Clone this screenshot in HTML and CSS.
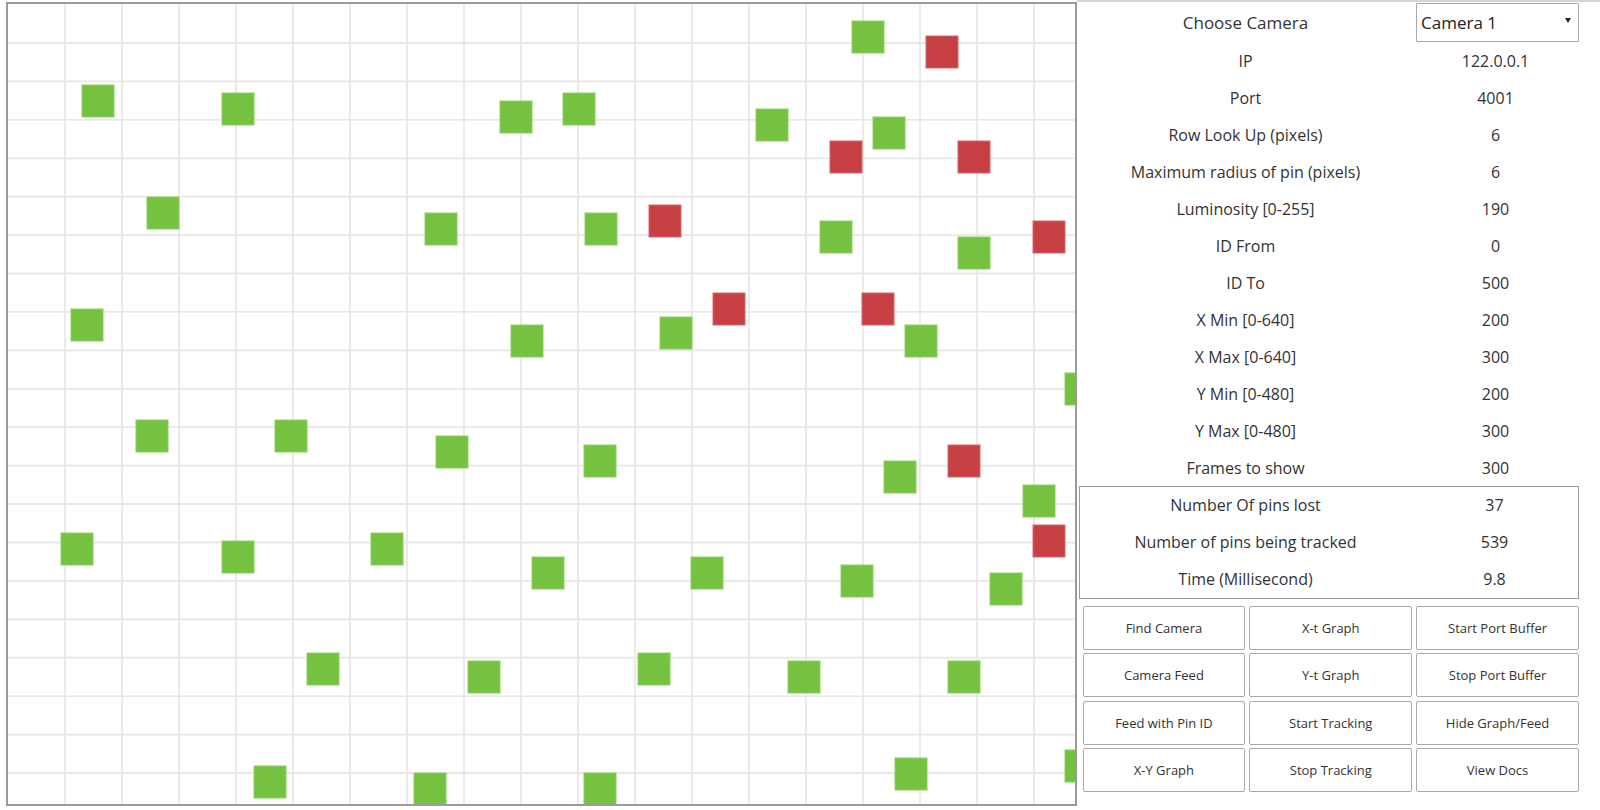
FILE: index.html
```html
<!DOCTYPE html>
<html lang="en">
<head>
<meta charset="utf-8">
<title>Pin Tracker</title>
<link rel="stylesheet" href="styles.css">
</head>
<body>
<div class="app">
  <div class="viewport">
    <svg class="feed" width="1067" height="800" viewBox="0 0 1067 800" xmlns="http://www.w3.org/2000/svg">
      <g class="grid">
        <line x1="57" y1="0" x2="57" y2="800"/>
        <line x1="114" y1="0" x2="114" y2="800"/>
        <line x1="171" y1="0" x2="171" y2="800"/>
        <line x1="228" y1="0" x2="228" y2="800"/>
        <line x1="285" y1="0" x2="285" y2="800"/>
        <line x1="342" y1="0" x2="342" y2="800"/>
        <line x1="399" y1="0" x2="399" y2="800"/>
        <line x1="456" y1="0" x2="456" y2="800"/>
        <line x1="513" y1="0" x2="513" y2="800"/>
        <line x1="570" y1="0" x2="570" y2="800"/>
        <line x1="627" y1="0" x2="627" y2="800"/>
        <line x1="684" y1="0" x2="684" y2="800"/>
        <line x1="741" y1="0" x2="741" y2="800"/>
        <line x1="798" y1="0" x2="798" y2="800"/>
        <line x1="855" y1="0" x2="855" y2="800"/>
        <line x1="912" y1="0" x2="912" y2="800"/>
        <line x1="969" y1="0" x2="969" y2="800"/>
        <line x1="1026" y1="0" x2="1026" y2="800"/>
        <line x1="0" y1="39" x2="1067" y2="39"/>
        <line x1="0" y1="77.4" x2="1067" y2="77.4"/>
        <line x1="0" y1="115.8" x2="1067" y2="115.8"/>
        <line x1="0" y1="154.3" x2="1067" y2="154.3"/>
        <line x1="0" y1="192.7" x2="1067" y2="192.7"/>
        <line x1="0" y1="231.1" x2="1067" y2="231.1"/>
        <line x1="0" y1="269.5" x2="1067" y2="269.5"/>
        <line x1="0" y1="307.9" x2="1067" y2="307.9"/>
        <line x1="0" y1="346.4" x2="1067" y2="346.4"/>
        <line x1="0" y1="384.8" x2="1067" y2="384.8"/>
        <line x1="0" y1="423.2" x2="1067" y2="423.2"/>
        <line x1="0" y1="461.6" x2="1067" y2="461.6"/>
        <line x1="0" y1="500" x2="1067" y2="500"/>
        <line x1="0" y1="538.5" x2="1067" y2="538.5"/>
        <line x1="0" y1="576.9" x2="1067" y2="576.9"/>
        <line x1="0" y1="615.3" x2="1067" y2="615.3"/>
        <line x1="0" y1="653.7" x2="1067" y2="653.7"/>
        <line x1="0" y1="692.1" x2="1067" y2="692.1"/>
        <line x1="0" y1="730.6" x2="1067" y2="730.6"/>
        <line x1="0" y1="769" x2="1067" y2="769"/>
      </g>
      <g class="pins ok">
        <rect x="844" y="17" width="32" height="32"/>
        <rect x="74" y="81" width="32" height="32"/>
        <rect x="214" y="89" width="32" height="32"/>
        <rect x="492" y="97" width="32" height="32"/>
        <rect x="555" y="89" width="32" height="32"/>
        <rect x="748" y="105" width="32" height="32"/>
        <rect x="865" y="113" width="32" height="32"/>
        <rect x="139" y="193" width="32" height="32"/>
        <rect x="417" y="209" width="32" height="32"/>
        <rect x="577" y="209" width="32" height="32"/>
        <rect x="812" y="217" width="32" height="32"/>
        <rect x="950" y="233" width="32" height="32"/>
        <rect x="63" y="305" width="32" height="32"/>
        <rect x="503" y="321" width="32" height="32"/>
        <rect x="652" y="313" width="32" height="32"/>
        <rect x="897" y="321" width="32" height="32"/>
        <rect x="1057" y="369" width="32" height="32"/>
        <rect x="128" y="416" width="32" height="32"/>
        <rect x="267" y="416" width="32" height="32"/>
        <rect x="428" y="432" width="32" height="32"/>
        <rect x="576" y="441" width="32" height="32"/>
        <rect x="876" y="457" width="32" height="32"/>
        <rect x="1015" y="481" width="32" height="32"/>
        <rect x="53" y="529" width="32" height="32"/>
        <rect x="214" y="537" width="32" height="32"/>
        <rect x="363" y="529" width="32" height="32"/>
        <rect x="524" y="553" width="32" height="32"/>
        <rect x="683" y="553" width="32" height="32"/>
        <rect x="833" y="561" width="32" height="32"/>
        <rect x="982" y="569" width="32" height="32"/>
        <rect x="299" y="649" width="32" height="32"/>
        <rect x="460" y="657" width="32" height="32"/>
        <rect x="630" y="649" width="32" height="32"/>
        <rect x="780" y="657" width="32" height="32"/>
        <rect x="940" y="657" width="32" height="32"/>
        <rect x="246" y="762" width="32" height="32"/>
        <rect x="406" y="769" width="32" height="32"/>
        <rect x="576" y="769" width="32" height="32"/>
        <rect x="887" y="754" width="32" height="32"/>
        <rect x="1057" y="746" width="32" height="32"/>
      </g>
      <g class="pins lost">
        <rect x="918" y="32" width="32" height="32"/>
        <rect x="822" y="137" width="32" height="32"/>
        <rect x="950" y="137" width="32" height="32"/>
        <rect x="641" y="201" width="32" height="32"/>
        <rect x="1025" y="217" width="32" height="32"/>
        <rect x="705" y="289" width="32" height="32"/>
        <rect x="854" y="289" width="32" height="32"/>
        <rect x="940" y="441" width="32" height="32"/>
        <rect x="1025" y="521" width="32" height="32"/>
      </g>
    </svg>
  </div>

  <div class="panel">
    <div class="row first">
      <div class="label">Choose Camera</div>
      <div class="select"><span>Camera 1</span><span class="caret"></span></div>
    </div>
    <div class="row"><div class="label">IP</div><div class="value">122.0.0.1</div></div>
    <div class="row"><div class="label">Port</div><div class="value">4001</div></div>
    <div class="row"><div class="label">Row Look Up (pixels)</div><div class="value">6</div></div>
    <div class="row"><div class="label">Maximum radius of pin (pixels)</div><div class="value">6</div></div>
    <div class="row"><div class="label">Luminosity [0-255]</div><div class="value">190</div></div>
    <div class="row"><div class="label">ID From</div><div class="value">0</div></div>
    <div class="row"><div class="label">ID To</div><div class="value">500</div></div>
    <div class="row"><div class="label">X Min [0-640]</div><div class="value">200</div></div>
    <div class="row"><div class="label">X Max [0-640]</div><div class="value">300</div></div>
    <div class="row"><div class="label">Y Min [0-480]</div><div class="value">200</div></div>
    <div class="row"><div class="label">Y Max [0-480]</div><div class="value">300</div></div>
    <div class="row"><div class="label">Frames to show</div><div class="value">300</div></div>

    <div class="stats">
      <div class="row"><div class="label">Number Of pins lost</div><div class="value">37</div></div>
      <div class="row"><div class="label">Number of pins being tracked</div><div class="value">539</div></div>
      <div class="row"><div class="label">Time (Millisecond)</div><div class="value">9.8</div></div>
    </div>

    <div class="buttons">
      <button class="btn">Find Camera</button>
      <button class="btn">X-t Graph</button>
      <button class="btn">Start Port Buffer</button>
      <button class="btn">Camera Feed</button>
      <button class="btn">Y-t Graph</button>
      <button class="btn">Stop Port Buffer</button>
      <button class="btn">Feed with Pin ID</button>
      <button class="btn">Start Tracking</button>
      <button class="btn">Hide Graph/Feed</button>
      <button class="btn">X-Y Graph</button>
      <button class="btn">Stop Tracking</button>
      <button class="btn">View Docs</button>
    </div>
  </div>
</div>
</body>
</html>
```

FILE: styles.css
```css
html, body {
  margin: 0;
  padding: 0;
  background: #ffffff;
}

body {
  font-family: "Open Sans", "Liberation Sans", sans-serif;
  color: #333333;
}

.app {
  display: flex;
  align-items: flex-start;
  padding-left: 6px;
}

.viewport {
  flex: none;
  width: 1067px;
  height: 800px;
  margin-top: 2px;
  border: 2px solid #9a9a9a;
  overflow: hidden;
  background: #ffffff;
}

.feed {
  display: block;
}

.grid line {
  stroke: #e8e8e8;
  stroke-width: 1.8;
}

.pins.ok rect {
  fill: #74c23f;
  stroke: #8fcf66;
  stroke-width: 1;
}

.pins.lost rect {
  fill: #c63f42;
  stroke: #d26a6c;
  stroke-width: 1;
}

.panel {
  flex: 1;
  border-top: 2px solid #d4d4d4;
  padding: 1px 21px 0 2px;
}

.row {
  display: grid;
  grid-template-columns: 1fr 163px;
  column-gap: 4px;
  align-items: center;
  height: 37px;
  font-size: 16px;
}

.row.first {
  height: 39px;
  font-size: 17px;
}

.label {
  text-align: center;
}

.value {
  text-align: center;
  padding-right: 4px;
}

.select {
  height: 39px;
  box-sizing: border-box;
  border: 1px solid #a9a9a9;
  border-radius: 1px;
  display: flex;
  align-items: center;
  justify-content: space-between;
  padding: 0 7px 0 4px;
  font-size: 17px;
  color: #222222;
}

.caret {
  width: 0;
  height: 0;
  border-left: 3px solid transparent;
  border-right: 3px solid transparent;
  border-top: 5px solid #222222;
  margin-top: -4px;
}

.stats {
  border: 1px solid #9a9a9a;
}

.stats .row {
  height: 36.9px;
}

.buttons {
  display: grid;
  grid-template-columns: repeat(3, 1fr);
  column-gap: 4px;
  row-gap: 3.3px;
  margin-top: 7.5px;
  padding-left: 3.5px;
}

.btn {
  height: 44px;
  box-sizing: border-box;
  margin: 0;
  padding: 0;
  border: 1px solid #a9a9a9;
  border-radius: 2px;
  background: #ffffff;
  font-family: "Open Sans", "Liberation Sans", sans-serif;
  font-size: 13px;
  color: #333333;
  display: flex;
  align-items: center;
  justify-content: center;
}
```
